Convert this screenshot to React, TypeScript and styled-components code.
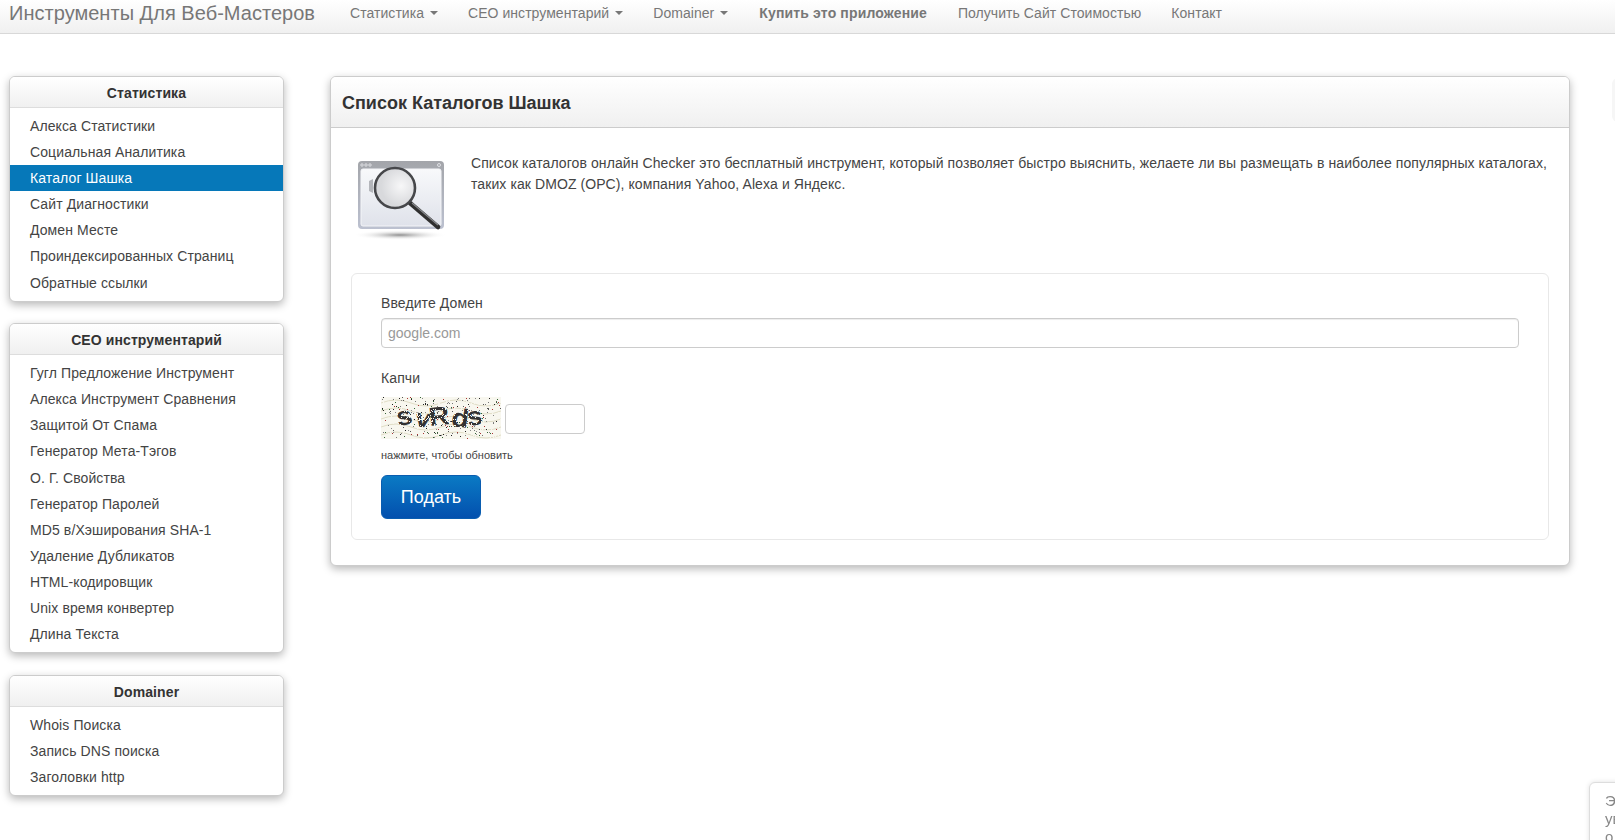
import styled, { createGlobalStyle } from 'styled-components'

const GlobalStyle = createGlobalStyle`
  html, body {
    margin: 0;
    height: 100%;
    overflow: hidden;
    background: #fff;
  }
  body {
    font-family: "Liberation Sans", Arial, sans-serif;
    font-size: 14px;
    line-height: 20px;
    letter-spacing: 0.1px;
    color: #333;
  }
  * {
    box-sizing: border-box;
  }
`

const Navbar = styled.nav`
  display: flex;
  align-items: center;
  height: 34px;
  padding-left: 9px;
  background: linear-gradient(to bottom, #fff 0%, #f0f0f0 100%);
  border-bottom: 1px solid #d8d8d8;
`

const Brand = styled.a`
  width: 341px;
  margin-top: -8px;
  font-size: 20px;
  letter-spacing: 0.03px;
  color: #777;
`

const NavLink = styled.a<{ $bold?: boolean }>`
  display: flex;
  align-items: center;
  margin-left: ${(p) => (p.$bold ? '1px' : '0')};
  margin-right: ${(p) => (p.$bold ? '31px' : '30px')};
  margin-top: -8px;
  letter-spacing: ${(p) => (p.$bold ? '0.15px' : '0.05px')};
  color: #777;
  font-weight: ${(p) => (p.$bold ? 'bold' : 'normal')};
`

const Caret = styled.span`
  width: 0;
  height: 0;
  margin-left: 6px;
  border-top: 4px solid #777;
  border-left: 4px solid transparent;
  border-right: 4px solid transparent;
`

const Layout = styled.div`
  display: flex;
  align-items: flex-start;
  gap: 46px;
  padding: 42px 45px 0 9px;
`

const Sidebar = styled.aside`
  display: flex;
  flex-direction: column;
  gap: 21.5px;
  width: 275px;
  flex-shrink: 0;
`

const Panel = styled.section`
  background: #fff;
  border: 1px solid #ccc;
  border-radius: 6px;
  box-shadow: 0 3px 8px rgba(0, 0, 0, 0.28);
  overflow: hidden;
`

const SideTitle = styled.h3`
  margin: 0;
  height: 31px;
  font-size: 14px;
  line-height: 32px;
  font-weight: bold;
  text-align: center;
  color: #333;
  background: linear-gradient(to bottom, #fff 0%, #f0f0f0 100%);
  border-bottom: 1px solid #ddd;
`

const SideList = styled.div`
  display: flex;
  flex-direction: column;
  padding: 5px 0 5px;
`

const SideItem = styled.a<{ $active?: boolean }>`
  height: 26.1px;
  padding: 3px 20px;
  color: ${(p) => (p.$active ? '#fff' : '#444')};
  background: ${(p) => (p.$active ? '#0678b9' : 'transparent')};
`

const Main = styled(Panel)`
  flex: 1;
  min-width: 0;
  height: 490px;
`

const MainHeader = styled.header`
  height: 51px;
  padding: 2px 11px 0;
  display: flex;
  align-items: center;
  background: linear-gradient(to bottom, #fff 0%, #f0f0f0 100%);
  border-bottom: 1px solid #ccc;
`

const MainTitle = styled.h1`
  margin: 0;
  font-size: 18px;
  font-weight: bold;
  letter-spacing: 0;
  color: #333;
`

const MainBody = styled.div`
  padding: 20px 20px 0;
`

const Intro = styled.div`
  display: flex;
  gap: 19px;
  height: 125px;
`

const IntroIcon = styled.svg`
  width: 100px;
  height: 92px;
  flex-shrink: 0;
  margin: 7px 0 0 1px;
`

const IntroText = styled.p`
  margin: 5px 0 0;
  line-height: 20.5px;
  letter-spacing: 0.09px;
  color: #444;
`

const FormBox = styled.form`
  height: 267px;
  padding: 19px 29px;
  border: 1px solid #e8e8e8;
  border-radius: 6px;
`

const Label = styled.label`
  display: block;
  margin-bottom: 5px;
  color: #444;
`

const TextInput = styled.input`
  display: block;
  width: 100%;
  height: 30px;
  padding: 0 6px;
  margin-bottom: 20px;
  font: inherit;
  color: #555;
  background: #fff;
  border: 1px solid #ccc;
  border-radius: 4px;
  box-shadow: inset 0 1px 1px rgba(0, 0, 0, 0.075);

  &::placeholder {
    color: #999;
  }
`

const CaptchaRow = styled.div`
  display: flex;
  align-items: center;
  gap: 4px;
  height: 44px;
  margin-top: 8px;
`

const CaptchaImage = styled.svg`
  width: 120px;
  height: 42px;
`

const CaptchaInput = styled.input`
  width: 80px;
  height: 30px;
  margin-top: 1px;
  background: #fff;
  border: 1px solid #ccc;
  border-radius: 4px;
`

const Hint = styled.div`
  margin-top: 5px;
  font-size: 11px;
  line-height: 20px;
  letter-spacing: 0;
  color: #444;
`

const SubmitButton = styled.button`
  display: block;
  width: 100px;
  height: 44px;
  margin-top: 10px;
  font-family: inherit;
  font-size: 18px;
  color: #fff;
  background: linear-gradient(to bottom, #0a7ac4 0%, #0350ae 100%);
  border: 1px solid #0a5db0;
  border-radius: 6px;
`

const Toast = styled.div`
  position: fixed;
  left: 1589px;
  top: 782px;
  width: 200px;
  height: 80px;
  padding: 9px 15px;
  font-size: 15px;
  line-height: 18px;
  color: #888;
  background: #fff;
  border: 1px solid #ddd;
  border-radius: 6px;
  box-shadow: 0 0 5px rgba(0, 0, 0, 0.12);
`

const EdgeTab = styled.div`
  position: fixed;
  left: 1612px;
  top: 78px;
  width: 20px;
  height: 44px;
  background: #f6f6f6;
  border-radius: 6px;
`

const menus = [
  {
    title: 'Статистика',
    items: ['Алекса Статистики', 'Социальная Аналитика', 'Каталог Шашка', 'Сайт Диагностики', 'Домен Месте', 'Проиндексированных Страниц', 'Обратные ссылки'],
  },
  {
    title: 'СЕО инструментарий',
    items: ['Гугл Предложение Инструмент', 'Алекса Инструмент Сравнения', 'Защитой От Спама', 'Генератор Мета-Тэгов', 'О. Г. Свойства', 'Генератор Паролей', 'MD5 в/Хэширования SHA-1', 'Удаление Дубликатов', 'HTML-кодировщик', 'Unix время конвертер', 'Длина Текста'],
  },
  {
    title: 'Domainer',
    items: ['Whois Поиска', 'Запись DNS поиска', 'Заголовки http'],
  },
]

// fixed pseudo random noise for the captcha picture
function noise(count: number, seed: number) {
  const dots: { x: number; y: number; c: string }[] = []
  let s = seed
  const colors = ['#555', '#222', '#888', '#a33', '#777', '#363']
  for (let i = 0; i < count; i++) {
    s = (s * 16807) % 2147483647
    const x = s % 120
    s = (s * 16807) % 2147483647
    const y = s % 42
    dots.push({ x, y, c: colors[i % colors.length] })
  }
  return dots
}

function SearchIcon() {
  return (
    <IntroIcon viewBox="0 0 100 92">
      <defs>
        <linearGradient id="win" x1="0" y1="0" x2="0" y2="1">
          <stop offset="0" stopColor="#f8f9fb" />
          <stop offset="1" stopColor="#dfe2ea" />
        </linearGradient>
        <linearGradient id="frame" x1="0" y1="0" x2="0" y2="1">
          <stop offset="0" stopColor="#a3a5aa" />
          <stop offset="1" stopColor="#bcc1d0" />
        </linearGradient>
        <radialGradient id="floor">
          <stop offset="0" stopColor="#8f8f8f" />
          <stop offset="1" stopColor="#fff" stopOpacity="0" />
        </radialGradient>
        <radialGradient id="lens" cx="0.65" cy="0.45">
          <stop offset="0" stopColor="#f7f7f8" />
          <stop offset="1" stopColor="#d8d9dc" />
        </radialGradient>
      </defs>
      <ellipse cx="48" cy="80" rx="47" ry="5" fill="url(#floor)" />
      <rect x="6" y="6" width="86" height="68" rx="4" fill="url(#frame)" />
      <rect x="9" y="14" width="80" height="57" rx="2" fill="url(#win)" stroke="#f4f5f8" />
      <circle cx="10" cy="10" r="1.2" fill="none" stroke="#dfe0e4" />
      <circle cx="14" cy="10" r="1.2" fill="none" stroke="#dfe0e4" />
      <circle cx="18" cy="10" r="1.2" fill="none" stroke="#dfe0e4" />
      <circle cx="87" cy="10" r="1.5" fill="none" stroke="#dfe0e4" />
      <path d="M17 26l4 -2v14l-4 -2z" fill="#b4b6bb" />
      <line x1="58" y1="48" x2="86" y2="72" stroke="#2f2f2f" strokeWidth="4.6" strokeLinecap="round" />
      <line x1="60" y1="48" x2="86" y2="70" stroke="#85878b" strokeWidth="1.2" />
      <circle cx="43" cy="33" r="20" fill="url(#lens)" stroke="#46474a" strokeWidth="2.6" />
    </IntroIcon>
  )
}

function Captcha() {
  return (
    <CaptchaImage viewBox="0 0 120 42">
      <rect width="120" height="42" fill="#f8f7ef" />
      {[6, 14, 22, 30, 38].map((y) => (
        <path key={y} d={`M0 ${y}q15 -6 30 0t30 0t30 0t30 0`} fill="none" stroke="#e0ddc6" />
      ))}
      {noise(300, 4711).map((d, i) => (
        <rect key={i} x={d.x} y={d.y} width="1" height="1" fill={d.c} />
      ))}
      <text x="17" y="29" rotate="-10 8 -6 7 -8" fontFamily="Liberation Sans, sans-serif" fontSize="26" fontWeight="bold" fill="#333" textLength="86" lengthAdjust="spacingAndGlyphs">
        svRds
      </text>
      {noise(620, 991).map((d, i) => (
        <rect key={i} x={d.x} y={d.y} width="1" height="1" fill="#f8f7ef" />
      ))}
    </CaptchaImage>
  )
}

export default function App() {
  return (
    <>
      <GlobalStyle />
      <Navbar>
        <Brand>Инструменты Для Веб-Мастеров</Brand>
        <NavLink>Статистика<Caret /></NavLink>
        <NavLink>СЕО инструментарий<Caret /></NavLink>
        <NavLink>Domainer<Caret /></NavLink>
        <NavLink $bold>Купить это приложение</NavLink>
        <NavLink>Получить Сайт Стоимостью</NavLink>
        <NavLink>Контакт</NavLink>
      </Navbar>
      <Layout>
        <Sidebar>
          {menus.map((menu) => (
            <Panel key={menu.title}>
              <SideTitle>{menu.title}</SideTitle>
              <SideList>
                {menu.items.map((item) => (
                  <SideItem key={item} $active={item === 'Каталог Шашка'}>{item}</SideItem>
                ))}
              </SideList>
            </Panel>
          ))}
        </Sidebar>
        <Main>
          <MainHeader>
            <MainTitle>Список Каталогов Шашка</MainTitle>
          </MainHeader>
          <MainBody>
            <Intro>
              <SearchIcon />
              <IntroText>
                Список каталогов онлайн Checker это бесплатный инструмент, который позволяет быстро выяснить, желаете ли вы размещать в наиболее популярных каталогах, таких как DMOZ (ОРС), компания Yahoo, Alexa и Яндекс.
              </IntroText>
            </Intro>
            <FormBox>
              <Label>Введите Домен</Label>
              <TextInput placeholder="google.com" />
              <Label>Капчи</Label>
              <CaptchaRow>
                <Captcha />
                <CaptchaInput />
              </CaptchaRow>
              <Hint>нажмите, чтобы обновить</Hint>
              <SubmitButton type="button">Подать</SubmitButton>
            </FormBox>
          </MainBody>
        </Main>
      </Layout>
      <EdgeTab />
      <Toast>Это<br />уведомление<br />о файлах</Toast>
    </>
  )
}
